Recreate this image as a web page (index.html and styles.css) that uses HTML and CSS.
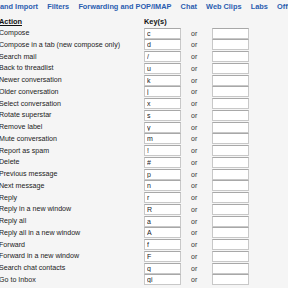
FILE: index.html
```
<!DOCTYPE html>
<html>
<head>
<meta charset="utf-8">
<link rel="stylesheet" href="styles.css">
</head>
<body>
<nav class="tabs">
  <a class="tab">and Import</a>
  <a class="tab">Filters</a>
  <a class="tab">Forwarding and POP/IMAP</a>
  <a class="tab">Chat</a>
  <a class="tab">Web Clips</a>
  <a class="tab">Labs</a>
  <a class="tab">Offline</a>
</nav>
<div class="grid">
  <div class="hd action-hd"><u>Action</u></div>
  <div class="hd keys-hd">Key(s)</div>
  <div></div><div></div>

  <div class="act">Compose</div><div class="k"><input class="key" value="c"></div><div class="or">or</div><div class="k"><input class="key" value=""></div>
  <div class="act">Compose in a tab (new compose only)</div><div class="k"><input class="key" value="d"></div><div class="or">or</div><div class="k"><input class="key" value=""></div>
  <div class="act">Search mail</div><div class="k"><input class="key" value="/"></div><div class="or">or</div><div class="k"><input class="key" value=""></div>
  <div class="act">Back to threadlist</div><div class="k"><input class="key" value="u"></div><div class="or">or</div><div class="k"><input class="key" value=""></div>
  <div class="act">Newer conversation</div><div class="k"><input class="key" value="k"></div><div class="or">or</div><div class="k"><input class="key" value=""></div>
  <div class="act">Older conversation</div><div class="k"><input class="key" value="j"></div><div class="or">or</div><div class="k"><input class="key" value=""></div>
  <div class="act">Select conversation</div><div class="k"><input class="key" value="x"></div><div class="or">or</div><div class="k"><input class="key" value=""></div>
  <div class="act">Rotate superstar</div><div class="k"><input class="key" value="s"></div><div class="or">or</div><div class="k"><input class="key" value=""></div>
  <div class="act">Remove label</div><div class="k"><input class="key" value="y"></div><div class="or">or</div><div class="k"><input class="key" value=""></div>
  <div class="act">Mute conversation</div><div class="k"><input class="key" value="m"></div><div class="or">or</div><div class="k"><input class="key" value=""></div>
  <div class="act">Report as spam</div><div class="k"><input class="key" value="!"></div><div class="or">or</div><div class="k"><input class="key" value=""></div>
  <div class="act">Delete</div><div class="k"><input class="key" value="#"></div><div class="or">or</div><div class="k"><input class="key" value=""></div>
  <div class="act">Previous message</div><div class="k"><input class="key" value="p"></div><div class="or">or</div><div class="k"><input class="key" value=""></div>
  <div class="act">Next message</div><div class="k"><input class="key" value="n"></div><div class="or">or</div><div class="k"><input class="key" value=""></div>
  <div class="act">Reply</div><div class="k"><input class="key" value="r"></div><div class="or">or</div><div class="k"><input class="key" value=""></div>
  <div class="act">Reply in a new window</div><div class="k"><input class="key" value="R"></div><div class="or">or</div><div class="k"><input class="key" value=""></div>
  <div class="act">Reply all</div><div class="k"><input class="key" value="a"></div><div class="or">or</div><div class="k"><input class="key" value=""></div>
  <div class="act">Reply all in a new window</div><div class="k"><input class="key" value="A"></div><div class="or">or</div><div class="k"><input class="key" value=""></div>
  <div class="act">Forward</div><div class="k"><input class="key" value="f"></div><div class="or">or</div><div class="k"><input class="key" value=""></div>
  <div class="act">Forward in a new window</div><div class="k"><input class="key" value="F"></div><div class="or">or</div><div class="k"><input class="key" value=""></div>
  <div class="act">Search chat contacts</div><div class="k"><input class="key" value="q"></div><div class="or">or</div><div class="k"><input class="key" value=""></div>
  <div class="act">Go to Inbox</div><div class="k"><input class="key" value="gi"></div><div class="or">or</div><div class="k"><input class="key" value=""></div>
</div>
</body>
</html>
```
FILE: styles.css
```
html, body {
  margin: 0;
  padding: 0;
  background: #f5f5f5;
  overflow: hidden;
}
body {
  font-family: "Liberation Sans", Arial, sans-serif;
  font-size: 7px;
  color: #222;
  width: 288px;
  height: 288px;
}
.tabs {
  display: flex;
  white-space: nowrap;
  height: 12px;
  align-items: center;
  margin-left: 0;
}
.tab {
  color: #2a5db0;
  font-weight: bold;
  font-size: 7.35px;
  margin-right: 9.2px;
}
.grid {
  display: grid;
  grid-template-columns: 144px 38px 30px 38px;
  grid-auto-rows: 11.76px;
  margin-top: 3.5px;
  margin-left: -1px;
}
.hd {
  font-weight: bold;
  font-size: 7.4px;
  color: #111;
  display: flex;
  align-items: center;
}
.keys-hd {
  margin-left: 1px;
}
.act {
  display: flex;
  align-items: center;
  white-space: nowrap;
  font-size: 7.1px;
  color: #222;
}
.k {
  display: flex;
  align-items: center;
}
.key {
  box-sizing: border-box;
  width: 37px;
  height: 11px;
  margin: 0 0 0 1px;
  padding: 0 0 0 2px;
  border: 1px solid #c8c8c8;
  border-top-color: #a8a8a8;
  background: #fff;
  font-family: "Liberation Sans", Arial, sans-serif;
  font-size: 7px;
  color: #222;
  outline: none;
}
.or {
  display: flex;
  align-items: center;
  padding-left: 10px;
  color: #333;
}
```
